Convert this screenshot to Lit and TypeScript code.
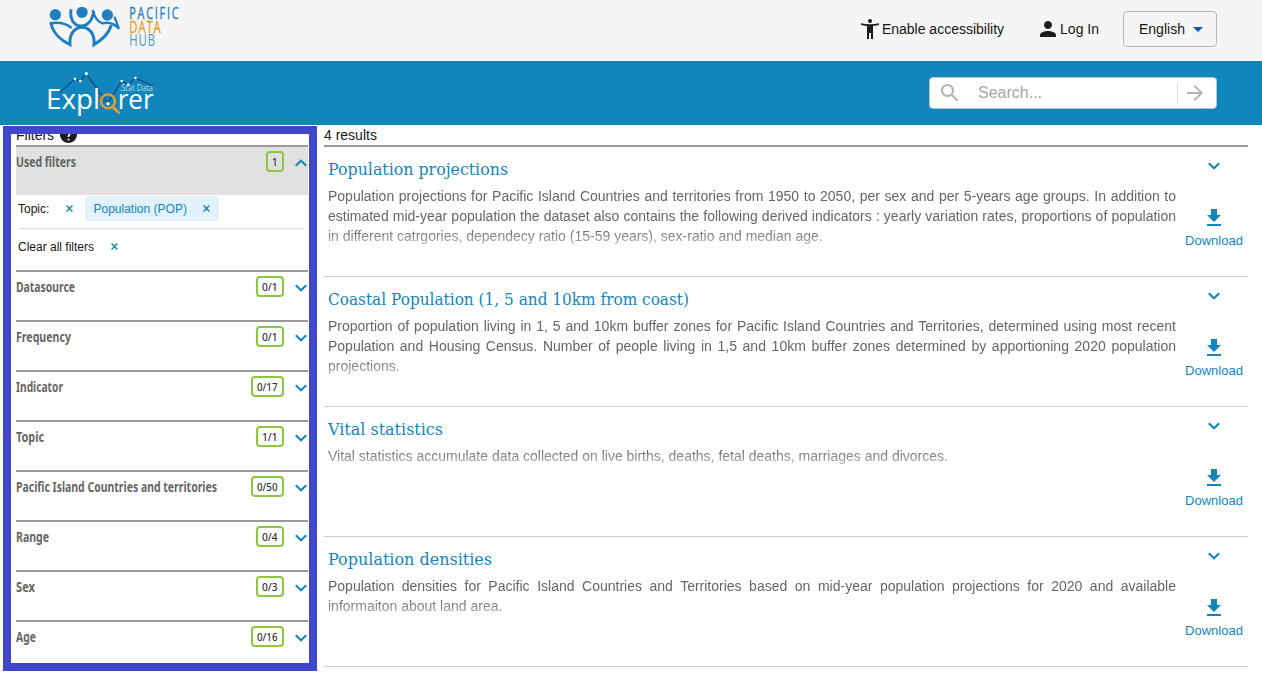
import { LitElement, html, css } from "lit";
import { customElement, property } from "lit/decorators.js";

const RESULTS = [
  { title: "Population projections", w: 180, text: "Population projections for Pacific Island Countries and territories from 1950 to 2050, per sex and per 5-years age groups. In addition to estimated mid-year population the dataset also contains the following derived indicators : yearly variation rates, proportions of population in different catrgories, dependecy ratio (15-59 years), sex-ratio and median age." },
  { title: "Coastal Population (1, 5 and 10km from coast)", w: 361, text: "Proportion of population living in 1, 5 and 10km buffer zones for Pacific Island Countries and Territories, determined using most recent Population and Housing Census. Number of people living in 1,5 and 10km buffer zones determined by apportioning 2020 population projections." },
  { title: "Vital statistics", w: 115, text: "Vital statistics accumulate data collected on live births, deaths, fetal deaths, marriages and divorces." },
  { title: "Population densities", w: 164, text: "Population densities for Pacific Island Countries and Territories based on mid-year population projections for 2020 and available informaiton about land area." },
];

const FILTERS = [
  { name: "Datasource", w: 59, count: "0/1", cw: 15.5 },
  { name: "Frequency", w: 55, count: "0/1", cw: 15.5 },
  { name: "Indicator", w: 47, count: "0/17", cw: 20.5 },
  { name: "Topic", w: 28, count: "1/1", cw: 15.5 },
  { name: "Pacific Island Countries and territories", w: 201, count: "0/50", cw: 20.5 },
  { name: "Range", w: 33, count: "0/4", cw: 15.5 },
  { name: "Sex", w: 19, count: "0/3", cw: 15.5 },
  { name: "Age", w: 20, count: "0/16", cw: 20.5 },
];

/** A single line of text condensed or expanded to a fixed width. */
@customElement("fit-text")
class FitText extends LitElement {
  @property() text = "";
  @property({ type: Number }) w = 10;
  static styles = css`
    :host { display: block; height: 20px; }
    svg { display: block; overflow: visible; }
  `;
  render() {
    return html`<svg width=${this.w} height="20" fill="currentColor">
      <text x="0" y="15" textLength=${this.w} lengthAdjust="spacingAndGlyphs">${this.text}</text>
    </svg>`;
  }
}

const chevron = (up = false) => html`<svg class="chev" width="12" height="8" viewBox="0 0 12 8">
  <path d=${up ? "M.8 6.7 6 1.8 11.2 6.7" : "M.8 1.3 6 6.2 11.2 1.3"} fill="none" stroke="#1385bd" stroke-width="2.1"/></svg>`;

const cross = () => html`<svg class="cross" width="7" height="7" viewBox="0 0 7 7">
  <path d="M.6.6 6.4 6.4M6.4.6.6 6.4" stroke="#1385bd" stroke-width="1.4"/></svg>`;

@customElement("app-root")
class AppRoot extends LitElement {
  static styles = css`
    :host { display: block; height: 682px; overflow: hidden; background: #fff; color: #161616;
      font-family: "Liberation Sans", Arial, sans-serif; font-size: 14px; line-height: 20px; }
    * { box-sizing: border-box; }
    svg { display: block; flex: none; }
    .top { height: 61px; background: #f5f5f5; display: flex; align-items: flex-start; padding: 0 45px 0 40px; }
    .actions { margin-left: auto; display: flex; align-items: center; height: 58px; }
    .action { display: flex; align-items: center; font-size: 14px; }
    .access { margin-right: 36px; gap: 3px; }
    .login { margin-right: 24px; gap: 4px; }
    .lang { width: 94px; height: 36px; border: 1px solid #b9b9b9; border-radius: 4px; display: flex;
      align-items: center; justify-content: space-between; padding: 0 13px 0 15px; font-size: 14px; }
    .band { height: 64px; background: #1385bd; display: flex; padding: 0 45px 0 40px; }
    .search { margin: 16px 0 0 auto; width: 288px; height: 32px; border: 1px solid #b4c4cc; border-radius: 4px;
      background: #fff; display: flex; align-items: center; color: #a6a6a6; font-size: 16px; padding-left: 11px; }
    .ph { margin-left: 19px; flex: 1; }
    .go { border-left: 1px solid #dadada; height: 21px; width: 39px; display: flex; align-items: center; padding-left: 9px; }
    .body { display: flex; padding-left: 3px; }
    .side { margin-top: 1px; width: 314px; height: 545px; border: 8px solid #3f48cc; padding: 0 1px 0 5px; overflow: hidden; }
    .fhead { height: 11px; overflow: hidden; display: flex; align-items: flex-end; font-size: 14px; }
    .fhead .in { display: flex; gap: 6px; height: 20px; align-items: center; }
    .fhead svg { margin-top: -1px; }
    .row { display: flex; align-items: flex-start; height: 50px; border-top: 2px solid #999; }
    .used { background: #e0e0e0; }
    .name { color: #666; font: 700 14px "Noto Sans", sans-serif; margin-top: 5px; }
    .badge { margin: 4px 11px 0 auto; height: 21px; border: 2px solid #8dc63f; border-radius: 4px; display: flex;
      align-items: center; padding: 0 4px; color: #333; font: 500 11.5px "Noto Sans", sans-serif; }
    .badge fit-text { height: 22px; margin-right: .5px; }
    .row .chev { margin: 12px 1px 0 0; }
    .tags { height: 34px; margin: 0 4px; border-bottom: 1px solid #dcdcdc; display: flex; align-items: center; font-size: 12px; }
    .lab { margin-left: -2px; width: 48px; }
    .topic { margin-top: -6px; display: grid; grid-template-columns: 46px 7px; align-items: center; }
    .chip { margin-left: 12px; margin-top: -6px; height: 25px; width: 134px; background: #e2f2fb; border-radius: 4px; display: flex;
      align-items: center; padding: 0 9px 0 8.5px; justify-content: space-between; color: #1385bd; }
    .clear { height: 41px; display: flex; align-items: center; padding: 0 0 6px 2px; gap: 17px; font-size: 12px; }
    .main { width: 924px; margin-left: 7px; }
    .count { height: 22px; border-bottom: 2px solid #999; }
    .item { height: 130px; border-bottom: 1px solid #ccc; display: flex; padding: 12px 0 0 4px; }
    .txt { width: 848px; flex: none; }
    .title { color: #1385bd; font: 400 16.5px "DejaVu Serif", serif; height: 26px; margin-top: 1px; }
    .desc { margin: 0; color: #666; text-align: justify;
      -webkit-mask-image: linear-gradient(to top, rgba(0,0,0,.4), #000 16px); mask-image: linear-gradient(to top, rgba(0,0,0,.4), #000 16px); }
    .dl { width: 76px; flex: none; display: flex; flex-direction: column; align-items: center; color: #1385bd; font-size: 13px; padding-top: 3px; }
    .dl .arrow { margin: 39px 0 5px; }
  `;

  pdhLogo() {
    return html`<svg width="150" height="60" viewBox="0 0 450 180">
      <g fill="#1f7fc0">
        <circle cx="46" cy="44" r="17"/><circle cx="126" cy="37" r="17"/><circle cx="202" cy="45" r="17"/>
      </g>
      <g fill="none" stroke="#1f7fc0">
        <path d="M93 28C84 92 154 96 161 34" stroke-width="9"/>
        <path d="M29 71C58 64 80 72 95 84" stroke-width="8"/>
        <path d="M33 70C38 96 60 120 90 134C84 64 168 64 162 134C190 118 206 100 214 76" stroke-width="9"/>
        <path d="M158 30C164 54 174 66 188 70C206 65 224 72 237 86L223 50" stroke-width="7"/>
      </g>
      <g font-family="Open Sans, sans-serif" font-size="49" stroke-width="1">
        <text x="268" y="57" fill="#1f7fc0" stroke="#1f7fc0" textLength="153" lengthAdjust="spacingAndGlyphs" letter-spacing="8">PACIFIC</text>
        <text x="268" y="98" fill="#eb9b26" stroke="#eb9b26" textLength="97" lengthAdjust="spacingAndGlyphs" letter-spacing="4">DATA</text>
        <text x="268" y="139" fill="#4a98cc" textLength="80" lengthAdjust="spacingAndGlyphs" letter-spacing="4">HUB</text>
      </g>
    </svg>`;
  }

  explorerLogo() {
    return html`<svg width="130" height="64" viewBox="0 3 390 192">
      <path d="M58 98 105 57 121 63 139 41 203 131 245 63 265 74 286 54 337 77" fill="none" stroke="#0d4f82" stroke-width="4"/>
      <g fill="#fff"><circle cx="105" cy="57" r="4"/><circle cx="121" cy="63" r="4"/><circle cx="139" cy="41" r="5"/>
      <circle cx="245" cy="63" r="4"/><circle cx="265" cy="74" r="4"/><circle cx="286" cy="54" r="4"/><circle cx="204" cy="131" r="5"/></g>
      <g fill="#fff" font-family="Open Sans, sans-serif" font-size="81">
        <text x="18" y="148" textLength="162" lengthAdjust="spacingAndGlyphs">Expl</text>
        <text x="233" y="148" textLength="108" lengthAdjust="spacingAndGlyphs">rer</text>
        <text x="238" y="94" font-size="25" fill="#b9dcee" textLength="101" lengthAdjust="spacingAndGlyphs">.Stat Data</text>
      </g>
      <circle cx="204" cy="124" r="21" fill="none" stroke="#eb9b26" stroke-width="7"/>
      <path d="M219 141 238 160" stroke="#eb9b26" stroke-width="8"/>
    </svg>`;
  }

  render() {
    return html`
      <div class="top">
        ${this.pdhLogo()}
        <div class="actions">
          <div class="action access">
            <svg width="18" height="20" viewBox="0 0 18 20" fill="#1d1d1d"><circle cx="9" cy="2" r="2"/>
              <path d="M0 4.2Q9 6.5 18 4.2V6.1L12 7V20H10V14H8V20H6V7L0 6.1Z"/></svg>
            <span>Enable accessibility</span>
          </div>
          <div class="action login">
            <svg width="16" height="16" viewBox="4 4 16 16" fill="#1d1d1d"><path d="M12 12c2.2 0 4-1.8 4-4s-1.8-4-4-4-4 1.8-4 4 1.8 4 4 4zm0 2c-2.7 0-8 1.3-8 4v2h16v-2c0-2.7-5.3-4-8-4z"/></svg>
            <span>Log In</span>
          </div>
          <div class="lang"><span>English</span>
            <svg width="10" height="5" viewBox="0 0 10 5"><path d="M0 0H10L5 5Z" fill="#0c52b3"/></svg></div>
        </div>
      </div>
      <div class="band">
        ${this.explorerLogo()}
        <div class="search">
          <svg width="18" height="18" viewBox="3 3 18 18" fill="#b3b3b3"><path d="M15.5 14h-.79l-.28-.27C15.41 12.59 16 11.11 16 9.5 16 5.91 13.09 3 9.5 3S3 5.91 3 9.5 5.91 16 9.5 16c1.61 0 3.09-.59 4.23-1.57l.27.28v.79l5 4.99L20.49 19l-4.99-5zm-6 0C7.01 14 5 11.99 5 9.5S7.01 5 9.5 5 14 7.01 14 9.5 11.99 14 9.5 14z"/></svg>
          <span class="ph">Search...</span>
          <span class="go"><svg width="16" height="16" viewBox="4 4 16 16" fill="#b3b3b3"><path d="M12 4l-1.41 1.41L16.17 11H4v2h12.17l-5.58 5.59L12 20l8-8z"/></svg></span>
        </div>
      </div>
      <div class="body">
        <div class="side">
          <div class="fhead"><div class="in"><span>Filters</span>
            <svg width="17" height="17" viewBox="2 2 20 20" fill="#1d1d1d"><path d="M12 2C6.48 2 2 6.48 2 12s4.48 10 10 10 10-4.48 10-10S17.52 2 12 2zm1 17h-2v-2h2v2zm2.07-7.75l-.9.92C13.45 12.9 13 13.5 13 15h-2v-.5c0-1.1.45-2.1 1.17-2.83l1.24-1.26c.37-.36.59-.86.59-1.41 0-1.1-.9-2-2-2s-2 .9-2 2H8c0-2.21 1.79-4 4-4s4 1.79 4 4c0 .88-.36 1.68-.93 2.25z"/></svg></div></div>
          <div class="row used"><fit-text class="name" text="Used filters" w="60"></fit-text>
            <span class="badge"><fit-text text="1" w="5.5"></fit-text></span>${chevron(true)}</div>
          <div class="tags"><span class="topic"><span class="lab">Topic:</span>${cross()}</span>
            <span class="chip"><span>Population (POP)</span>${cross()}</span></div>
          <div class="clear"><span>Clear all filters</span>${cross()}</div>
          ${FILTERS.map((f) => html`<div class="row"><fit-text class="name" text=${f.name} w=${f.w}></fit-text>
            <span class="badge"><fit-text text=${f.count} w=${f.cw}></fit-text></span>${chevron()}</div>`)}
        </div>
        <div class="main">
          <div class="count">4 results</div>
          ${RESULTS.map((r) => html`<div class="item">
            <div class="txt"><fit-text class="title" text=${r.title} w=${r.w}></fit-text><p class="desc">${r.text}</p></div>
            <div class="dl">${chevron()}
              <svg class="arrow" width="14" height="17" viewBox="5 3 14 17" fill="#1385bd"><path d="M19 9h-4V3H9v6H5l7 7 7-7zM5 18v2h14v-2H5z"/></svg>
              <span>Download</span></div>
          </div>`)}
        </div>
      </div>`;
  }
}
